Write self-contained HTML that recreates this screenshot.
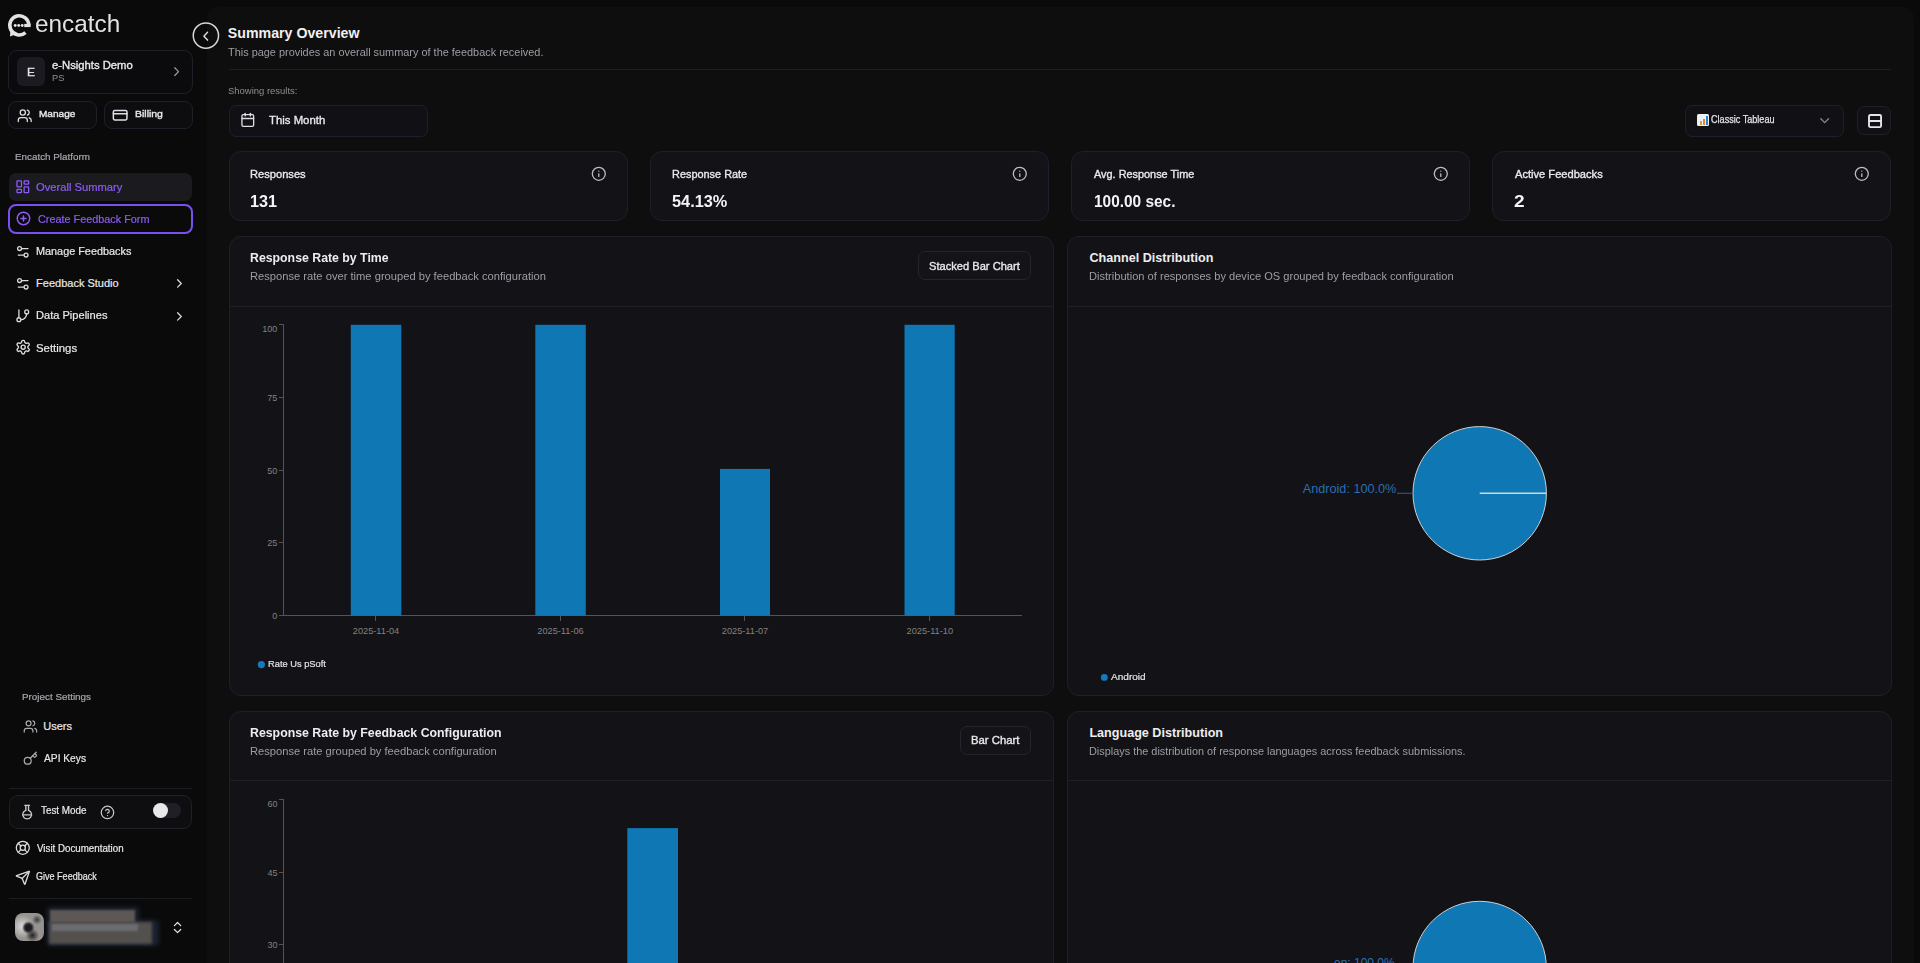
<!DOCTYPE html>
<html><head><meta charset="utf-8">
<style>
*{box-sizing:border-box;margin:0;padding:0}
html,body{width:1920px;height:963px;overflow:hidden;background:#0a0a0a;font-family:"Liberation Sans",sans-serif;color:#ececee}
.a{position:absolute}
.t{position:absolute;white-space:nowrap;line-height:1;transform-origin:0 0}
.ic{position:absolute;overflow:visible}
</style></head><body>
<div class="a" style="left:207px;top:7px;width:1707px;height:1000px;background:#0e0e0f;border-radius:10px;"></div>
<svg class="ic" style="left:0;top:0" width="40" height="42" viewBox="0 0 40 42"><path d="M28.85 25.4 A9.55 9.55 0 1 0 25.5 32.6" fill="none" stroke="#e2e2e2" stroke-width="3.5"/><path d="M9.9 36.4 L10.6 30 L15.2 34.6 Z" fill="#e2e2e2"/><rect x="24.2" y="23.9" width="6.4" height="3.2" fill="#e2e2e2"/><circle cx="15.2" cy="25.5" r="1.45" fill="#e2e2e2"/><circle cx="18.7" cy="25.5" r="1.45" fill="#e2e2e2"/><circle cx="22.2" cy="25.5" r="1.45" fill="#e2e2e2"/></svg>
<div class="a" style="left:8px;top:50px;width:185px;height:44px;border-radius:9px;background:#0b0b0d;border:1px solid #1e2029;"></div>
<div class="a" style="left:17px;top:57px;width:28px;height:29px;background:#1b1b21;border-radius:6px;"></div>
<svg class="ic" style="left:168.90px;top:64.20px" width="15.26" height="15.26" viewBox="0 0 24 24" fill="none" stroke="#9a9aa2" stroke-width="2" stroke-linecap="round" stroke-linejoin="round"><path d="m9 18 6-6-6-6"/></svg>
<div class="a" style="left:8px;top:101px;width:89px;height:28px;border-radius:8px;background:#0d0d10;border:1px solid #1e2029;"></div>
<div class="a" style="left:104px;top:101px;width:89px;height:28px;border-radius:8px;background:#0d0d10;border:1px solid #1e2029;"></div>
<svg class="ic" style="left:17.05px;top:107.90px" width="15.48" height="15.48" viewBox="0 0 24 24" fill="none" stroke="#e0e0e4" stroke-width="2" stroke-linecap="round" stroke-linejoin="round"><path d="M16 21v-2a4 4 0 0 0-4-4H6a4 4 0 0 0-4 4v2"/><circle cx="9" cy="7" r="4"/><path d="M22 21v-2a4 4 0 0 0-3-3.87"/><path d="M16 3.13a4 4 0 0 1 0 7.75"/></svg>
<svg class="ic" style="left:111.84px;top:106.60px" width="16.32" height="16.32" viewBox="0 0 24 24" fill="none" stroke="#e0e0e4" stroke-width="2.2" stroke-linecap="round" stroke-linejoin="round"><rect width="20" height="14" x="2" y="5" rx="2"/><path d="M2 10h20"/></svg>
<div class="a" style="left:9px;top:173px;width:183px;height:28px;background:#1a1a1f;border-radius:7px;"></div>
<svg class="ic" style="left:14.90px;top:178.90px" width="15.60" height="15.60" viewBox="0 0 24 24" fill="none" stroke="#8b5cf6" stroke-width="2" stroke-linecap="round" stroke-linejoin="round"><rect width="7" height="9" x="3" y="3" rx="1"/><rect width="7" height="5" x="14" y="3" rx="1"/><rect width="7" height="9" x="14" y="12" rx="1"/><rect width="7" height="5" x="3" y="16" rx="1"/></svg>
<div class="a" style="left:8px;top:204px;width:185px;height:30px;border-radius:8px;border:2px solid #7b4ff0"></div>
<svg class="ic" style="left:16.30px;top:211.30px" width="14.95" height="14.95" viewBox="0 0 24 24" fill="none" stroke="#8b5cf6" stroke-width="2.4" stroke-linecap="round" stroke-linejoin="round"><circle cx="12" cy="12" r="10"/><path d="M8 12h8"/><path d="M12 8v8"/></svg>
<svg class="ic" style="left:15.25px;top:243.75px" width="15.60" height="15.60" viewBox="0 0 24 24" fill="none" stroke="#dcdce0" stroke-width="2" stroke-linecap="round" stroke-linejoin="round"><path d="M20 7h-9"/><path d="M14 17H5"/><circle cx="17" cy="17" r="3"/><circle cx="7" cy="7" r="3"/></svg>
<svg class="ic" style="left:15.25px;top:275.70px" width="15.60" height="15.60" viewBox="0 0 24 24" fill="none" stroke="#dcdce0" stroke-width="2" stroke-linecap="round" stroke-linejoin="round"><path d="M20 7h-9"/><path d="M14 17H5"/><circle cx="17" cy="17" r="3"/><circle cx="7" cy="7" r="3"/></svg>
<svg class="ic" style="left:171.60px;top:276.10px" width="14.88" height="14.88" viewBox="0 0 24 24" fill="none" stroke="#dcdce0" stroke-width="2" stroke-linecap="round" stroke-linejoin="round"><path d="m9 18 6-6-6-6"/></svg>
<svg class="ic" style="left:14.90px;top:307.90px" width="15.60" height="15.60" viewBox="0 0 24 24" fill="none" stroke="#dcdce0" stroke-width="2" stroke-linecap="round" stroke-linejoin="round"><path d="M6 3v12"/><circle cx="18" cy="6" r="3"/><circle cx="6" cy="18" r="3"/><path d="M18 9a9 9 0 0 1-9 9"/></svg>
<svg class="ic" style="left:171.60px;top:308.50px" width="14.88" height="14.88" viewBox="0 0 24 24" fill="none" stroke="#dcdce0" stroke-width="2" stroke-linecap="round" stroke-linejoin="round"><path d="m9 18 6-6-6-6"/></svg>
<svg class="ic" style="left:14.60px;top:339.30px" width="16.32" height="16.32" viewBox="0 0 24 24" fill="none" stroke="#dcdce0" stroke-width="2" stroke-linecap="round" stroke-linejoin="round"><path d="M12.22 2h-.44a2 2 0 0 0-2 2v.18a2 2 0 0 1-1 1.73l-.43.25a2 2 0 0 1-2 0l-.15-.08a2 2 0 0 0-2.73.73l-.22.38a2 2 0 0 0 .73 2.73l.15.1a2 2 0 0 1 1 1.72v.51a2 2 0 0 1-1 1.74l-.15.09a2 2 0 0 0-.73 2.73l.22.38a2 2 0 0 0 2.73.73l.15-.08a2 2 0 0 1 2 0l.43.25a2 2 0 0 1 1 1.73V20a2 2 0 0 0 2 2h.44a2 2 0 0 0 2-2v-.18a2 2 0 0 1 1-1.73l.43-.25a2 2 0 0 1 2 0l.15.08a2 2 0 0 0 2.73-.73l.22-.39a2 2 0 0 0-.73-2.73l-.15-.08a2 2 0 0 1-1-1.74v-.5a2 2 0 0 1 1-1.74l.15-.09a2 2 0 0 0 .73-2.73l-.22-.38a2 2 0 0 0-2.73-.73l-.15.08a2 2 0 0 1-2 0l-.43-.25a2 2 0 0 1-1-1.73V4a2 2 0 0 0-2-2z"/><circle cx="12" cy="12" r="3"/></svg>
<svg class="ic" style="left:22.70px;top:718.80px" width="14.88" height="14.88" viewBox="0 0 24 24" fill="none" stroke="#a8a8ae" stroke-width="2" stroke-linecap="round" stroke-linejoin="round"><path d="M16 21v-2a4 4 0 0 0-4-4H6a4 4 0 0 0-4 4v2"/><circle cx="9" cy="7" r="4"/><path d="M22 21v-2a4 4 0 0 0-3-3.87"/><path d="M16 3.13a4 4 0 0 1 0 7.75"/></svg>
<svg class="ic" style="left:22.70px;top:751.40px" width="15.12" height="15.12" viewBox="0 0 24 24" fill="none" stroke="#a8a8ae" stroke-width="2" stroke-linecap="round" stroke-linejoin="round"><path d="m15.5 7.5 2.3 2.3a1 1 0 0 0 1.4 0l2.1-2.1a1 1 0 0 0 0-1.4L19 4"/><path d="m21 2-9.6 9.6"/><circle cx="7.5" cy="15.5" r="5.5"/></svg>
<div class="a" style="left:9px;top:788px;width:183px;height:1px;background:#1c1d23;"></div>
<div class="a" style="left:9px;top:795px;width:183px;height:34px;border-radius:9px;background:#0e0e11;border:1px solid #1e2029;"></div>
<svg class="ic" style="left:18.74px;top:804.20px" width="16.32" height="16.32" viewBox="0 0 24 24" fill="none" stroke="#c8c8cc" stroke-width="2" stroke-linecap="round" stroke-linejoin="round"><path d="M10 2v7.31"/><path d="M14 9.3V1.99"/><path d="M8.5 2h7"/><path d="M14 9.3a6.5 6.5 0 1 1-4 0"/><path d="M5.52 16h12.96"/></svg>
<svg class="ic" style="left:99.70px;top:804.90px" width="14.95" height="14.95" viewBox="0 0 24 24" fill="none" stroke="#c8c8cc" stroke-width="2" stroke-linecap="round" stroke-linejoin="round"><circle cx="12" cy="12" r="10"/><path d="M9.09 9a3 3 0 0 1 5.83 1c0 2-3 3-3 3"/><path d="M12 17h.01"/></svg>
<div class="a" style="left:152.7px;top:803px;width:28px;height:15px;background:#1f2027;border-radius:8px;"></div>
<div class="a" style="left:152.7px;top:803px;width:15.3px;height:15.3px;background:#e8e8e8;border-radius:50%;"></div>
<svg class="ic" style="left:14.95px;top:840.35px" width="15.60" height="15.60" viewBox="0 0 24 24" fill="none" stroke="#dcdce0" stroke-width="2" stroke-linecap="round" stroke-linejoin="round"><circle cx="12" cy="12" r="10"/><path d="m4.93 4.93 4.24 4.24"/><path d="m14.83 9.17 4.24-4.24"/><path d="m14.83 14.83 4.24 4.24"/><path d="m9.17 14.83-4.24 4.24"/><circle cx="12" cy="12" r="4"/></svg>
<svg class="ic" style="left:14.95px;top:869.65px" width="15.60" height="15.60" viewBox="0 0 24 24" fill="none" stroke="#dcdce0" stroke-width="2" stroke-linecap="round" stroke-linejoin="round"><path d="M14.536 21.686a.5.5 0 0 0 .937-.024l6.5-19a.496.496 0 0 0-.635-.635l-19 6.5a.5.5 0 0 0-.024.937l7.93 3.18a2 2 0 0 1 1.112 1.11z"/><path d="m21.854 2.147-10.94 10.939"/></svg>
<div class="a" style="left:9px;top:898px;width:183px;height:1px;background:#1c1d23;"></div>
<div class="a" style="left:15.4px;top:912.9px;width:28.4px;height:28px;background:radial-gradient(circle at 46% 52%, #15171c 0, #1e2024 16%, rgba(30,30,30,0) 30%), radial-gradient(circle at 60% 80%, #222 0, rgba(30,30,30,0) 24%), radial-gradient(circle at 76% 24%, #3a3d44 0, rgba(40,40,40,0) 16%), radial-gradient(circle at 26% 48%, #dcdcdc 0, rgba(210,210,210,0) 45%), #979390;border-radius:8px;"></div>
<div class="a" style="left:47px;top:907px;width:92px;height:18px;background:#1b2130;border-radius:3px;filter:blur(2px);"></div>
<div class="a" style="left:47px;top:920px;width:112px;height:26px;background:#1b2130;border-radius:3px;filter:blur(2px);"></div>
<div class="a" style="left:50px;top:909.5px;width:85px;height:13px;background:#5d5855;filter:blur(1.2px);"></div>
<div class="a" style="left:49px;top:922px;width:103px;height:21.5px;background:#53504e;filter:blur(1.5px);"></div>
<div class="a" style="left:52px;top:923.5px;width:86px;height:7.5px;background:#6c6d71;filter:blur(1.2px);"></div>
<svg class="ic" style="left:169.80px;top:920.00px" width="15.12" height="15.12" viewBox="0 0 24 24" fill="none" stroke="#e0e0e4" stroke-width="2" stroke-linecap="round" stroke-linejoin="round"><path d="m7 15 5 5 5-5"/><path d="m7 9 5-5 5 5"/></svg>
<svg class="ic" style="left:192px;top:22px" width="28" height="28" viewBox="0 0 28 28"><circle cx="13.9" cy="13.55" r="12.65" fill="none" stroke="#d8d8d8" stroke-width="1.5"/><path d="M15.5 10.3L11.9 14.2L15.5 18.1" fill="none" stroke="#d8d8d8" stroke-width="1.5" stroke-linecap="round" stroke-linejoin="round"/></svg>
<div class="a" style="left:229px;top:69px;width:1662px;height:1px;background:#1e1e23;"></div>
<div class="a" style="left:229px;top:105px;width:199px;height:32px;border-radius:7px;background:#111115;border:1px solid #1e2029;"></div>
<svg class="ic" style="left:239.70px;top:112.35px" width="15.60" height="15.60" viewBox="0 0 24 24" fill="none" stroke="#e0e0e4" stroke-width="2" stroke-linecap="round" stroke-linejoin="round"><path d="M8 2v4"/><path d="M16 2v4"/><rect width="18" height="18" x="3" y="4" rx="2"/><path d="M3 10h18"/></svg>
<div class="a" style="left:1685px;top:105px;width:159px;height:32px;border-radius:7px;background:#111115;border:1px solid #1e2029;"></div>
<div class="a" style="left:1697.3px;top:114.3px;width:12px;height:12px;background:#eef1f4;border-radius:1.5px;"></div>
<div class="a" style="left:1700px;top:121px;width:1.6px;height:4px;background:#e59b3a;"></div>
<div class="a" style="left:1703.2px;top:118.5px;width:1.6px;height:6.5px;background:#d88a2f;"></div>
<div class="a" style="left:1706.2px;top:116px;width:1.8px;height:9px;background:#2f7fd0;"></div>
<svg class="ic" style="left:1816.60px;top:112.70px" width="15.36" height="15.36" viewBox="0 0 24 24" fill="none" stroke="#8d8a86" stroke-width="2" stroke-linecap="round" stroke-linejoin="round"><path d="m6 9 6 6 6-6"/></svg>
<div class="a" style="left:1857px;top:106px;width:34px;height:29px;border-radius:7px;background:#111115;border:1px solid #1e2029;"></div>
<svg class="ic" style="left:1867.20px;top:112.50px" width="16.08" height="16.08" viewBox="0 0 24 24" fill="none" stroke="#e6e6e8" stroke-width="2.8" stroke-linecap="round" stroke-linejoin="round"><rect width="18" height="18" x="3" y="3" rx="2"/><path d="M3 12h18"/></svg>
<div class="a" style="left:229px;top:151px;width:399px;height:70px;border-radius:12px;background:#131317;border:1px solid #1e2029;"></div>
<div class="a" style="left:650px;top:151px;width:399px;height:70px;border-radius:12px;background:#131317;border:1px solid #1e2029;"></div>
<div class="a" style="left:1071px;top:151px;width:399px;height:70px;border-radius:12px;background:#131317;border:1px solid #1e2029;"></div>
<div class="a" style="left:1492px;top:151px;width:399px;height:70px;border-radius:12px;background:#131317;border:1px solid #1e2029;"></div>
<svg class="ic" style="left:590.55px;top:166.45px" width="15.60" height="15.60" viewBox="0 0 24 24" fill="none" stroke="#bdbdc2" stroke-width="2" stroke-linecap="round" stroke-linejoin="round"><circle cx="12" cy="12" r="10"/><path d="M12 16v-4"/><path d="M12 8h.01"/></svg>
<svg class="ic" style="left:1011.55px;top:166.45px" width="15.60" height="15.60" viewBox="0 0 24 24" fill="none" stroke="#bdbdc2" stroke-width="2" stroke-linecap="round" stroke-linejoin="round"><circle cx="12" cy="12" r="10"/><path d="M12 16v-4"/><path d="M12 8h.01"/></svg>
<svg class="ic" style="left:1432.55px;top:166.45px" width="15.60" height="15.60" viewBox="0 0 24 24" fill="none" stroke="#bdbdc2" stroke-width="2" stroke-linecap="round" stroke-linejoin="round"><circle cx="12" cy="12" r="10"/><path d="M12 16v-4"/><path d="M12 8h.01"/></svg>
<svg class="ic" style="left:1853.55px;top:166.45px" width="15.60" height="15.60" viewBox="0 0 24 24" fill="none" stroke="#bdbdc2" stroke-width="2" stroke-linecap="round" stroke-linejoin="round"><circle cx="12" cy="12" r="10"/><path d="M12 16v-4"/><path d="M12 8h.01"/></svg>
<div class="a" style="left:229px;top:236px;width:825px;height:460px;border-radius:12px;background:#131317;border:1px solid #1e2029;"></div>
<div class="a" style="left:230px;top:306px;width:823px;height:1px;background:#1f2026;"></div>
<div class="a" style="left:1067px;top:236px;width:825px;height:460px;border-radius:12px;background:#131317;border:1px solid #1e2029;"></div>
<div class="a" style="left:1068px;top:306px;width:823px;height:1px;background:#1f2026;"></div>
<div class="a" style="left:229px;top:711px;width:825px;height:400px;border-radius:12px;background:#131317;border:1px solid #1e2029;"></div>
<div class="a" style="left:230px;top:780px;width:823px;height:1px;background:#1f2026;"></div>
<div class="a" style="left:1067px;top:711px;width:825px;height:400px;border-radius:12px;background:#131317;border:1px solid #1e2029;"></div>
<div class="a" style="left:1068px;top:780px;width:823px;height:1px;background:#1f2026;"></div>
<div class="a" style="left:918px;top:251px;width:113px;height:29px;border-radius:7px;background:#131318;border:1px solid #22262e;"></div>
<div class="a" style="left:960px;top:726px;width:71px;height:29px;border-radius:7px;background:#131318;border:1px solid #22262e;"></div>
<svg class="ic" style="left:0;top:0" width="1920" height="963" viewBox="0 0 1920 963">
<g stroke="#5a524e" stroke-width="1" fill="none" shape-rendering="crispEdges">
<path d="M283.5 324.5V615.5M279 615.5H1022"/>
<path d="M279 324.5H283.5M279 397.5H283.5M279 470.5H283.5M279 542.5H283.5"/>
<path d="M375.5 616V621M560.5 616V621M744.5 616V621M929.5 616V621"/>
<path d="M283.5 799.5V963M279 799.5H283.5M279 872.5H283.5M279 944.5H283.5"/>
</g>
<g fill="#0f77b4">
<rect x="350.8" y="324.8" width="50.5" height="291"/>
<rect x="535.3" y="324.8" width="50.5" height="291"/>
<rect x="720" y="468.9" width="50" height="146.9"/>
<rect x="904.5" y="324.8" width="50.2" height="291"/>
<rect x="627.3" y="828.1" width="50.7" height="140"/>
</g>
<g font-family="Liberation Sans" font-size="9" fill="#85807c" text-anchor="end">
<text x="277.2" y="332.2">100</text><text x="277.2" y="400.6">75</text><text x="277.2" y="473.6">50</text><text x="277.2" y="545.6">25</text><text x="277.2" y="618.6">0</text>
<text x="277.4" y="806.6">60</text><text x="277.4" y="875.6">45</text><text x="277.4" y="947.8">30</text>
</g>
<g font-family="Liberation Sans" font-size="8.6" fill="#85807c" text-anchor="middle">
<text x="376" y="634.3" textLength="46.5" lengthAdjust="spacingAndGlyphs">2025-11-04</text><text x="560.5" y="634.3" textLength="46.5" lengthAdjust="spacingAndGlyphs">2025-11-06</text><text x="745" y="634.3" textLength="46.5" lengthAdjust="spacingAndGlyphs">2025-11-07</text><text x="929.8" y="634.3" textLength="46.5" lengthAdjust="spacingAndGlyphs">2025-11-10</text>
</g>
<circle cx="261.4" cy="664.6" r="3.6" fill="#1479bf"/>
<circle cx="1104.3" cy="677.4" r="3.4" fill="#1479bf"/>
<circle cx="1479.7" cy="493.3" r="66.7" fill="#0f77b4" stroke="#cfcfcf" stroke-width="1"/>
<path d="M1479.7 493.2H1546.4" stroke="#d6d6d6" stroke-width="1.6"/>
<path d="M1397 493.3H1412.5" stroke="#23558a" stroke-width="1.2"/>
<text x="1302.8" y="492.9" font-family="Liberation Sans" font-size="12" fill="#2a6eaf" textLength="93.5" lengthAdjust="spacingAndGlyphs">Android: 100.0%</text>
<circle cx="1479.7" cy="968" r="66.7" fill="#0f77b4" stroke="#cfcfcf" stroke-width="1"/>
<text x="1334" y="967" font-family="Liberation Sans" font-size="12" fill="#2a73b4">en: 100.0%</text>
</svg>
<div class="t" style="left:35.29px;top:11.51px;font-size:24.2px;color:#e2e2e2;transform:scaleX(1.0061);">encatch</div>
<div class="t" style="left:26.88px;top:67.01px;font-size:11.8px;color:#e4e4e8;transform:scaleX(1.0156);-webkit-text-stroke:0.35px #e4e4e8;">E</div>
<div class="t" style="left:51.80px;top:59.52px;font-size:11.2px;color:#e9e9ec;transform:scaleX(1.0063);-webkit-text-stroke:0.35px #e9e9ec;">e-Nsights Demo</div>
<div class="t" style="left:51.55px;top:73.72px;font-size:8.6px;color:#8e8e96;transform:scaleX(1.0769);">PS</div>
<div class="t" style="left:38.66px;top:108.87px;font-size:9.6px;color:#e9e9ec;transform:scaleX(1.0478);-webkit-text-stroke:0.35px #e9e9ec;">Manage</div>
<div class="t" style="left:134.63px;top:108.87px;font-size:9.6px;color:#e9e9ec;transform:scaleX(1.0909);-webkit-text-stroke:0.35px #e9e9ec;">Billing</div>
<div class="t" style="left:14.86px;top:152.04px;font-size:9.4px;color:#a6a6ae;transform:scaleX(1.0499);-webkit-text-stroke:0.2px #a6a6ae;">Encatch Platform</div>
<div class="t" style="left:36.49px;top:181.69px;font-size:11px;color:#8b5cf6;transform:scaleX(1.0154);-webkit-text-stroke:0.2px #8b5cf6;">Overall Summary</div>
<div class="t" style="left:37.51px;top:213.69px;font-size:11px;color:#8b5cf6;transform:scaleX(0.9857);-webkit-text-stroke:0.2px #8b5cf6;">Create Feedback Form</div>
<div class="t" style="left:36.11px;top:245.69px;font-size:11px;color:#e9e9ec;transform:scaleX(0.9864);-webkit-text-stroke:0.2px #e9e9ec;">Manage Feedbacks</div>
<div class="t" style="left:36.10px;top:277.69px;font-size:11px;color:#e9e9ec;-webkit-text-stroke:0.2px #e9e9ec;">Feedback Studio</div>
<div class="t" style="left:36.09px;top:309.69px;font-size:11px;color:#e9e9ec;transform:scaleX(1.0072);-webkit-text-stroke:0.2px #e9e9ec;">Data Pipelines</div>
<div class="t" style="left:36.48px;top:342.69px;font-size:11px;color:#e9e9ec;transform:scaleX(1.0335);-webkit-text-stroke:0.2px #e9e9ec;">Settings</div>
<div class="t" style="left:21.96px;top:692.04px;font-size:9.4px;color:#a6a6ae;transform:scaleX(1.0510);-webkit-text-stroke:0.2px #a6a6ae;">Project Settings</div>
<div class="t" style="left:43.30px;top:720.69px;font-size:11px;color:#e9e9ec;-webkit-text-stroke:0.2px #e9e9ec;">Users</div>
<div class="t" style="left:44.10px;top:752.69px;font-size:11px;color:#e9e9ec;transform:scaleX(0.9286);-webkit-text-stroke:0.2px #e9e9ec;">API Keys</div>
<div class="t" style="left:40.91px;top:806.37px;font-size:10.2px;color:#e9e9ec;transform:scaleX(0.9677);-webkit-text-stroke:0.2px #e9e9ec;">Test Mode</div>
<div class="t" style="left:36.70px;top:844.37px;font-size:10.2px;color:#e9e9ec;transform:scaleX(0.9577);-webkit-text-stroke:0.2px #e9e9ec;">Visit Documentation</div>
<div class="t" style="left:36.36px;top:872.37px;font-size:10.2px;color:#e9e9ec;transform:scaleX(0.8869);-webkit-text-stroke:0.2px #e9e9ec;">Give Feedback</div>
<div class="t" style="left:227.80px;top:25.98px;font-size:14.2px;font-weight:bold;color:#f0f0f2;">Summary Overview</div>
<div class="t" style="left:228.00px;top:46.69px;font-size:11px;color:#9d9da6;transform:scaleX(0.9921);">This page provides an overall summary of the feedback received.</div>
<div class="t" style="left:227.72px;top:85.70px;font-size:9.8px;color:#8d8d94;transform:scaleX(0.9660);">Showing results:</div>
<div class="t" style="left:268.51px;top:114.18px;font-size:11.6px;color:#e9e9ec;transform:scaleX(0.9805);-webkit-text-stroke:0.35px #e9e9ec;">This Month</div>
<div class="t" style="left:1711.08px;top:113.86px;font-size:10.8px;color:#e4e4e8;transform:scaleX(0.8423);-webkit-text-stroke:0.25px #e4e4e8;">Classic Tableau</div>
<div class="t" style="left:249.70px;top:168.52px;font-size:11.2px;color:#e9e9ec;transform:scaleX(0.9945);-webkit-text-stroke:0.35px #e9e9ec;">Responses</div>
<div class="t" style="left:250.32px;top:193.95px;font-size:16.6px;font-weight:bold;color:#f4f4f6;transform:scaleX(0.9772);">131</div>
<div class="t" style="left:671.72px;top:168.52px;font-size:11.2px;color:#e9e9ec;transform:scaleX(0.9749);-webkit-text-stroke:0.35px #e9e9ec;">Response Rate</div>
<div class="t" style="left:672.31px;top:193.95px;font-size:16.6px;font-weight:bold;color:#f4f4f6;transform:scaleX(0.9837);">54.13%</div>
<div class="t" style="left:1093.80px;top:168.52px;font-size:11.2px;color:#e9e9ec;transform:scaleX(0.9737);-webkit-text-stroke:0.35px #e9e9ec;">Avg. Response Time</div>
<div class="t" style="left:1094.27px;top:193.95px;font-size:16.6px;font-weight:bold;color:#f4f4f6;transform:scaleX(0.9287);">100.00 sec.</div>
<div class="t" style="left:1514.70px;top:168.52px;font-size:11.2px;color:#e9e9ec;transform:scaleX(0.9932);-webkit-text-stroke:0.35px #e9e9ec;">Active Feedbacks</div>
<div class="t" style="left:1514.31px;top:193.95px;font-size:16.6px;font-weight:bold;color:#f4f4f6;transform:scaleX(1.1500);">2</div>
<div class="t" style="left:250.02px;top:252.33px;font-size:12.6px;font-weight:bold;color:#ededf0;transform:scaleX(0.9773);">Response Rate by Time</div>
<div class="t" style="left:249.89px;top:270.69px;font-size:11px;color:#9d9da6;transform:scaleX(1.0145);">Response rate over time grouped by feedback configuration</div>
<div class="t" style="left:928.62px;top:260.18px;font-size:11.6px;color:#e9e9ec;transform:scaleX(0.9586);-webkit-text-stroke:0.35px #e9e9ec;">Stacked Bar Chart</div>
<div class="t" style="left:1089.50px;top:252.33px;font-size:12.6px;font-weight:bold;color:#ededf0;">Channel Distribution</div>
<div class="t" style="left:1089.09px;top:270.69px;font-size:11px;color:#9d9da6;transform:scaleX(1.0089);">Distribution of responses by device OS grouped by feedback configuration</div>
<div class="t" style="left:267.54px;top:658.70px;font-size:9.8px;color:#e2e2e6;transform:scaleX(0.9485);-webkit-text-stroke:0.2px #e2e2e6;">Rate Us pSoft</div>
<div class="t" style="left:1111.00px;top:671.70px;font-size:9.8px;color:#e2e2e6;transform:scaleX(1.0272);-webkit-text-stroke:0.2px #e2e2e6;">Android</div>
<div class="t" style="left:250.12px;top:727.33px;font-size:12.6px;font-weight:bold;color:#ededf0;transform:scaleX(0.9792);">Response Rate by Feedback Configuration</div>
<div class="t" style="left:249.99px;top:745.69px;font-size:11px;color:#9d9da6;transform:scaleX(1.0136);">Response rate grouped by feedback configuration</div>
<div class="t" style="left:970.62px;top:734.18px;font-size:11.6px;color:#e9e9ec;transform:scaleX(0.9774);-webkit-text-stroke:0.35px #e9e9ec;">Bar Chart</div>
<div class="t" style="left:1089.40px;top:727.33px;font-size:12.6px;font-weight:bold;color:#ededf0;">Language Distribution</div>
<div class="t" style="left:1089.31px;top:745.69px;font-size:11px;color:#9d9da6;transform:scaleX(0.9900);">Displays the distribution of response languages across feedback submissions.</div>
</body></html>
